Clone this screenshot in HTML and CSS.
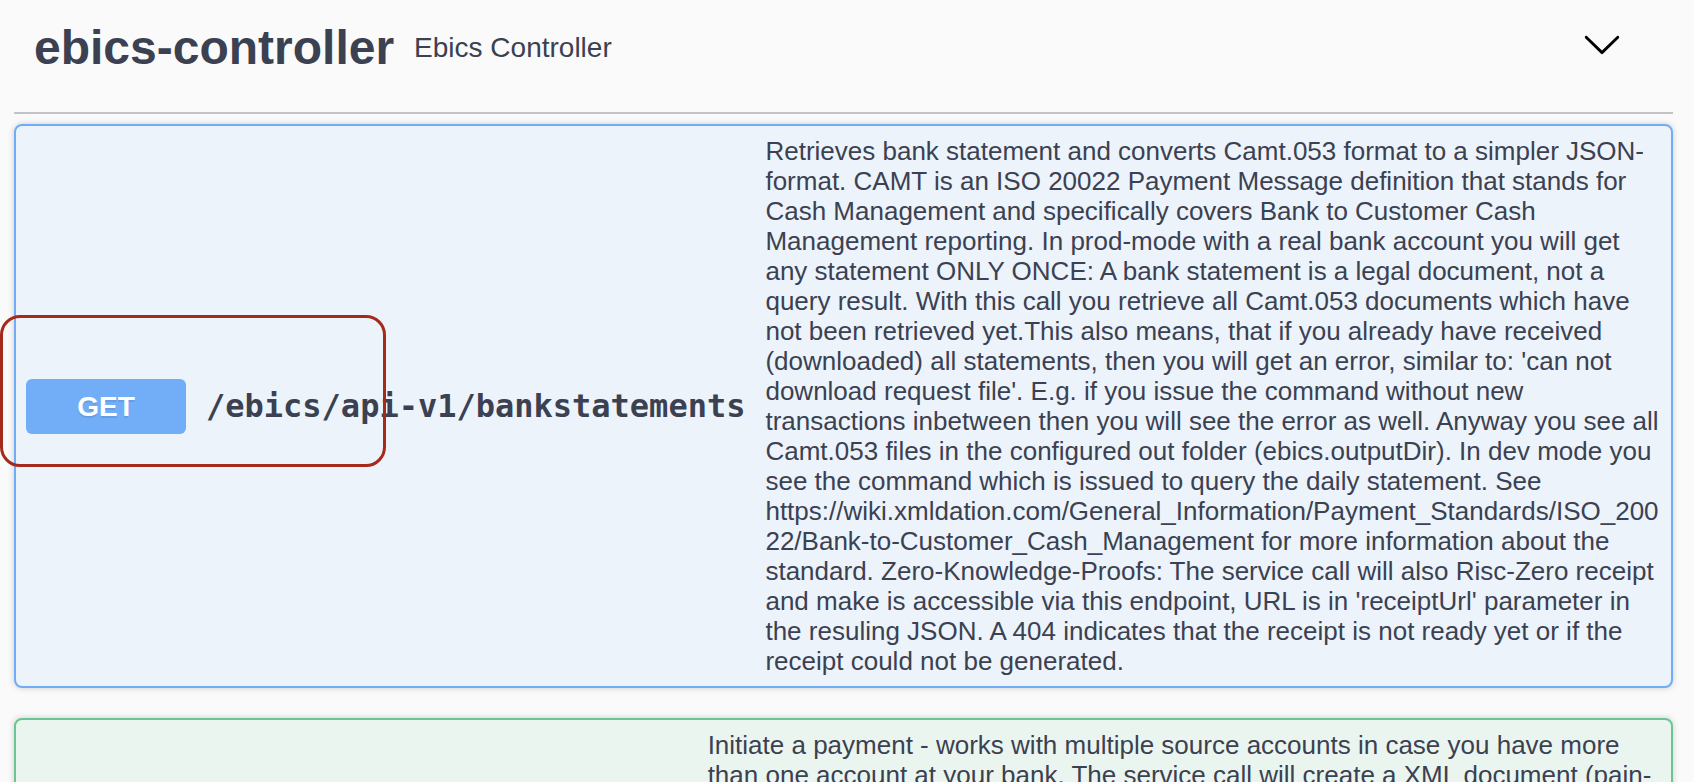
FILE: index.html
```html
<!DOCTYPE html>
<html lang="en">
<head>
<meta charset="utf-8">
<title>ebics-controller</title>
<link rel="stylesheet" href="styles.css">
</head>
<body>
<div class="wrapper">
  <section class="tag-section">
    <h3 class="opblock-tag">
      <span class="tag-name">ebics-controller</span>
      <small class="tag-desc">Ebics Controller</small>
      <button class="expand" aria-label="collapse">
        <svg class="arrow" viewBox="0 0 20 20" width="40" height="40" aria-hidden="true"><path d="M17.418 6.109c.272-.268.709-.268.979 0s.271.701 0 .969l-7.908 7.830c-.27.268-.707.268-.979 0l-7.908-7.83c-.27-.268-.27-.701 0-.969.271-.268.709-.268.979 0L10 13.25l7.418-7.141z"/></svg>
      </button>
    </h3>

    <div class="opblock opblock-get">
      <div class="summary">
        <span class="method method-get">GET</span>
        <div class="path-wrap">
          <span class="path">/ebics/api-v1/bankstatements</span>
          <div class="desc">Retrieves bank statement and converts Camt.053 format to a simpler JSON-format. CAMT is an ISO 20022 Payment Message definition that stands for Cash Management and specifically covers Bank to Customer Cash Management reporting. In prod-mode with a real bank account you will get any statement ONLY ONCE: A bank statement is a legal document, not a query result. With this call you retrieve all Camt.053 documents which have not been retrieved yet.This also means, that if you already have received (downloaded) all statements, then you will get an error, similar to: 'can not download request file'. E.g. if you issue the command without new transactions inbetween then you will see the error as well. Anyway you see all Camt.053 files in the configured out folder (ebics.outputDir). In dev mode you see the command which is issued to query the daily statement. See https://wiki.xmldation.com/General_Information/Payment_Standards/ISO_20022/Bank-to-Customer_Cash_Management for more information about the standard. Zero-Knowledge-Proofs: The service call will also Risc-Zero receipt and make is accessible via this endpoint, URL is in 'receiptUrl' parameter in the resuling JSON. A 404 indicates that the receipt is not ready yet or if the receipt could not be generated.</div>
        </div>
      </div>
    </div>

    <div class="opblock opblock-post">
      <div class="summary">
        <span class="method method-post">POST</span>
        <div class="path-wrap">
          <span class="path">/ebics/api-v1/initpayment</span>
          <div class="desc">Initiate a payment - works with multiple source accounts in case you have more than one account at your bank. The service call will create a XML document (pain-001.001.09) and sends it to the bank via the EBICS protocol. The payment is then executed by the bank. In dev mode you see the command which is issued to upload the payment order. The response contains the order id which can be used to track the status of the payment.</div>
        </div>
      </div>
    </div>
  </section>
</div>
<div class="annotation" aria-hidden="true"></div>
</body>
</html>
```

FILE: styles.css
```css
html, body {
  margin: 0;
  padding: 0;
  background: #fafafa;
}

body {
  font-family: "Liberation Sans", Arial, sans-serif;
  color: #3b4151;
  overflow: hidden;
}

.wrapper {
  padding: 0 21px 0 14px;
}

.opblock-tag {
  display: flex;
  align-items: center;
  margin: 0 0 10px;
  padding: 20px 51px 36px 20px;
  border-bottom: 2px solid #c1c3c7;
  font-weight: 700;
}

.tag-name {
  font-size: 48px;
  line-height: 56px;
  font-weight: 700;
  color: #3b4151;
}

.tag-desc {
  flex: 1;
  padding: 0 20px;
  font-size: 28px;
  line-height: 32px;
  font-weight: 400;
  color: #3b4151;
}

.expand {
  display: block;
  margin: 0 0 8px;
  padding: 0;
  border: none;
  background: none;
  width: 40px;
  height: 40px;
}

.arrow {
  display: block;
  width: 40px;
  height: 40px;
  fill: #000;
}

.opblock {
  margin: 0 0 30px;
  border: 2px solid #000;
  border-radius: 8px;
  box-shadow: 0 0 6px rgba(0, 0, 0, .19);
}

.opblock-get {
  border-color: #71adf7;
  background: #ecf3fb;
}

.opblock-post {
  border-color: #6cc591;
  background: #ebf5ef;
}

.summary {
  display: flex;
  align-items: center;
  padding: 10px;
}

.method {
  flex: none;
  width: 160px;
  padding: 12px 0;
  border-radius: 6px;
  font-size: 28px;
  line-height: 31px;
  font-weight: 700;
  text-align: center;
  color: #fff;
  text-shadow: 0 2px 0 rgba(0, 0, 0, .1);
}

.method-get {
  background: #72adf8;
}

.method-post {
  background: #62c491;
}

.path-wrap {
  flex: 1;
  min-width: 0;
  display: flex;
  align-items: center;
  gap: 0 20px;
  padding-left: 20px;
}

.path {
  flex: none;
  white-space: nowrap;
  font-family: "DejaVu Sans Mono", "Liberation Mono", monospace;
  font-size: 32px;
  line-height: 37px;
  font-weight: 700;
  color: #3b4151;
}

.desc {
  flex: 1 1 0;
  min-width: 0;
  font-size: 26px;
  line-height: 30px;
  color: #3b4151;
  word-break: break-word;
}

.annotation {
  position: absolute;
  left: 0;
  top: 315px;
  width: 386px;
  height: 152px;
  box-sizing: border-box;
  border: 3px solid #a62a1c;
  border-radius: 20px;
  pointer-events: none;
}
```
